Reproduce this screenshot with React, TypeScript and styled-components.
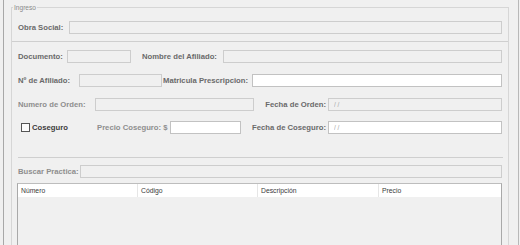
import React from "react";
import styled, { createGlobalStyle } from "styled-components";

const Global = createGlobalStyle`
  html, body { margin: 0; padding: 0; background: #f0f0f0; }
  * { box-sizing: border-box; }
`;

const Page = styled.div`
  width: 520px;
  height: 245px;
  overflow: hidden;
  background: #f0f0f0;
  font-family: "Liberation Sans", Arial, sans-serif;
`;

const Frame = styled.div`
  margin-left: 3px;
  width: 516px;
  height: 245px;
  border-left: 1px solid #a8a8a8;
  border-right: 1px solid #b8b8b8;
  padding-top: 7px;
`;

const GroupBox = styled.div`
  position: relative;
  margin-left: 7px;
  width: 498px;
  height: 300px;
  border: 1px solid #d6d6d6;
  padding-top: 13px;
  display: flex;
  flex-direction: column;
`;

const Title = styled.span`
  position: absolute;
  top: -5px;
  left: 1px;
  padding: 0 1px;
  background: #f0f0f0;
  font-size: 6.6px;
  line-height: 9px;
  color: #8a8a8a;
`;

const Row = styled.div<{ $top?: number }>`
  display: flex;
  align-items: center;
  height: 13px;
  margin-top: ${(p) => p.$top ?? 0}px;
  padding: 0 6px;
`;

const Label = styled.span<{ $w?: number; $ml?: number; $tone?: "normal" | "dim" | "dark"; $right?: boolean }>`
  flex: ${(p) => (p.$w ? `0 0 ${p.$w}px` : "1 1 auto")};
  margin-left: ${(p) => p.$ml ?? 0}px;
  padding-right: ${(p) => (p.$right ? 2 : 0)}px;
  text-align: ${(p) => (p.$right ? "right" : "left")};
  font-size: 7.7px;
  font-weight: bold;
  white-space: nowrap;
  color: ${(p) => (p.$tone === "dim" ? "#8e8e8e" : p.$tone === "dark" ? "#3c3c3c" : "#6a6a6a")};
`;

const Field = styled.input<{ $w?: number; $on?: boolean }>`
  flex: ${(p) => (p.$w ? `0 0 ${p.$w}px` : "1 1 auto")};
  width: ${(p) => (p.$w ? `${p.$w}px` : "auto")};
  min-width: 0;
  height: 13px;
  margin: 0;
  padding: 0 0 0 5px;
  border: 1px solid ${(p) => (p.$on ? "#c2c2c2" : "#cdcdcd")};
  background: ${(p) => (p.$on ? "#ffffff" : "#f0f0f0")};
  font-family: "Liberation Sans", Arial, sans-serif;
  font-size: 6.5px;
  color: #a8a8a8;
  outline: none;
`;

const CheckWrap = styled.span`
  flex: 0 0 79px;
  display: flex;
  align-items: center;
  gap: 2px;
  padding-left: 3px;
`;

const Box = styled.span`
  width: 9px;
  height: 9px;
  border: 1px solid #555;
  background: #fdfdfd;
`;

const Separator = styled.div<{ $top: number; $inset?: boolean }>`
  height: 1px;
  margin-top: ${(p) => p.$top}px;
  margin-left: ${(p) => (p.$inset ? 6 : 0)}px;
  margin-right: ${(p) => (p.$inset ? 5 : 0)}px;
  background: #cfcfcf;
`;

const Table = styled.div`
  margin: 5px 6px 0 5px;
  height: 90px;
  border: 1px solid #a9a9a9;
  border-top-color: #bdbdbd;
  background: #f0f0f0;
`;

const Header = styled.div`
  display: grid;
  grid-template-columns: 120px 120px 121px 1fr;
  height: 13px;
  background: #ffffff;
`;

const HeadCell = styled.div`
  display: flex;
  align-items: center;
  padding-left: 3px;
  border-right: 1px solid #e6e6e6;
  font-size: 6.8px;
  color: #3a3a3a;
  white-space: nowrap;
  &:last-child { border-right: none; }
`;

export default function App() {
  return (
    <Page>
      <Global />
      <Frame>
        <GroupBox>
          <Title>Ingreso</Title>

          <Row>
            <Label $w={51}>Obra Social:</Label>
            <Field readOnly />
          </Row>

          <Separator $top={7} />

          <Row $top={8}>
            <Label $w={49}>Documento:</Label>
            <Field readOnly $w={64} />
            <Label $w={81} $ml={11}>Nombre del Afiliado:</Label>
            <Field readOnly />
          </Row>

          <Row $top={11}>
            <Label $w={61}>Nº de Afiliado:</Label>
            <Field readOnly $w={83} />
            <Label $w={89} $ml={1}>Matricula Prescripcion:</Label>
            <Field readOnly $on />
          </Row>

          <Row $top={11}>
            <Label $w={77} $tone="dim">Numero de Orden:</Label>
            <Field readOnly $w={159} />
            <Label $right>Fecha de Orden:</Label>
            <Field readOnly $w={174} value="/ /" />
          </Row>

          <Row $top={10}>
            <CheckWrap>
              <Box />
              <Label $tone="dark">Coseguro</Label>
            </CheckWrap>
            <Label $w={73} $tone="dim">Precio Coseguro: $</Label>
            <Field readOnly $on $w={71} />
            <Label $right>Fecha de Coseguro:</Label>
            <Field readOnly $on $w={174} value="/ /" />
          </Row>

          <Separator $top={23} $inset />

          <Row $top={7}>
            <Label $w={62} $tone="dim">Buscar Practica:</Label>
            <Field readOnly />
          </Row>

          <Table>
            <Header>
              <HeadCell>Número</HeadCell>
              <HeadCell>Código</HeadCell>
              <HeadCell>Descripción</HeadCell>
              <HeadCell>Precio</HeadCell>
            </Header>
          </Table>
        </GroupBox>
      </Frame>
    </Page>
  );
}
